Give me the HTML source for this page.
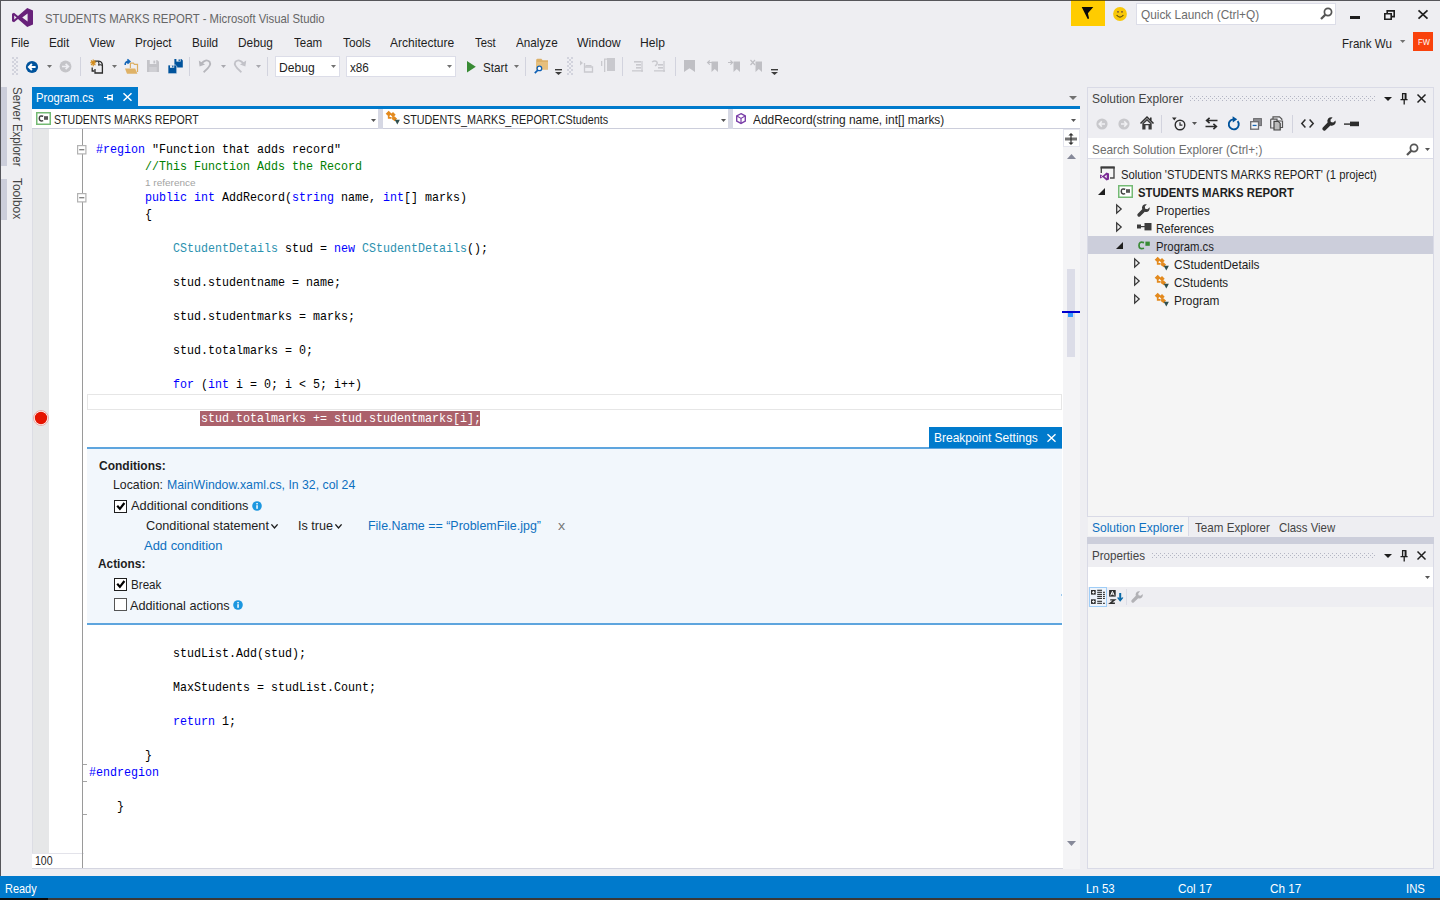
<!DOCTYPE html>
<html>
<head>
<meta charset="utf-8">
<title>STUDENTS MARKS REPORT - Microsoft Visual Studio</title>
<style>
*{box-sizing:border-box;margin:0;padding:0}
html,body{width:1440px;height:900px;overflow:hidden;background:#eeeef2}
body{font-family:"Liberation Sans",sans-serif;font-size:12px;color:#1e1e1e;position:relative}
.a{position:absolute;white-space:nowrap}
.t{position:absolute;white-space:pre;line-height:16px;height:16px}
.code{position:absolute;white-space:pre;font-family:"Liberation Mono",monospace;font-size:13px;line-height:17px;transform-origin:0 0;transform:scaleX(0.8974);height:17px;color:#000}
.k{color:#0000ff}.c{color:#008000}.ty{color:#2b91af}
svg{position:absolute;overflow:visible}
</style>
</head>
<body>
<!-- window frame -->
<div class="a" style="left:0px;top:0px;width:1440px;height:1px;background:#55555a;"></div>
<div class="a" style="left:0px;top:0px;width:1px;height:876px;background:#55555a;"></div>
<!-- title bar -->
<svg style="left:12px;top:8px;" width="21" height="19" viewBox="0 0 21 19"><path fill="#68217a" fill-rule="evenodd" d="M15.2 0 L21 2.4 V16.6 L15.2 19 L6 10.9 L2 14.2 L0 13.2 V5.8 L2 4.8 L6 8.1 Z M15.6 5.6 L10.2 9.5 L15.6 13.4 Z M2.2 7.4 V11.6 L4.6 9.5 Z"/></svg>
<div class="t" style="left:44.67px;top:11.00px;font-size:13px;color:#666;transform-origin:0 0;transform:scaleX(0.8718);">STUDENTS MARKS REPORT - Microsoft Visual Studio</div>
<div class="a" style="left:1070.6px;top:0px;width:34.2px;height:26px;background:#ffcc00;"></div>
<div class="a" style="left:1070.6px;top:0px;width:34.2px;height:1px;background:#6b5600;"></div>
<svg style="left:1081px;top:6px;" width="13" height="14" viewBox="0 0 13 14"><path fill="#0a0a0a" d="M0.7 0.9 H12.3 L6.9 7.2 L8.1 12.6 L6.7 13 Z"/></svg>
<svg style="left:1112.6px;top:6.6px;" width="14" height="14" viewBox="0 0 14 14"><circle cx="7" cy="7" r="6.9" fill="#f8c808"/><circle cx="5" cy="4.8" r="0.9" fill="#6b4a3a"/><circle cx="9" cy="4.8" r="0.9" fill="#6b4a3a"/><path d="M3.6 8 Q7 12.4 10.4 8" fill="none" stroke="#5a4a10" stroke-width="1.2"/></svg>
<div class="a" style="left:1136px;top:3px;width:200px;height:22px;background:#fff;border:1px solid #dcdde8"></div>
<div class="t" style="left:1141.47px;top:7.00px;font-size:13px;color:#6d6d6d;transform-origin:0 0;transform:scaleX(0.9110);">Quick Launch (Ctrl+Q)</div>
<svg style="left:1320px;top:7px;" width="13.5" height="13" viewBox="0 0 13.5 13"><circle cx="8" cy="5" r="3.6" fill="none" stroke="#555" stroke-width="1.7"/><path d="M5.4 7.6 L1 12" stroke="#555" stroke-width="2.2"/></svg>
<div class="a" style="left:1350px;top:16px;width:10px;height:3px;background:#1e1e1e;"></div>
<svg style="left:1384px;top:10px;" width="11" height="10" viewBox="0 0 11 10"><path fill="none" stroke="#1e1e1e" stroke-width="1.6" d="M0.8 3.8 H7.2 V9.2 H0.8 Z M3.2 3.6 V0.9 H10.2 V6.6 H7.4"/></svg>
<svg style="left:1418px;top:10px;" width="10" height="9" viewBox="0 0 10 9"><path stroke="#1e1e1e" stroke-width="1.7" d="M0.5 0.3 L9.5 8.7 M9.5 0.3 L0.5 8.7"/></svg>
<div class="t" style="left:1341.58px;top:36.00px;font-size:13px;color:#1e1e1e;transform-origin:0 0;transform:scaleX(0.8902);">Frank Wu</div>
<svg style="left:1399.6px;top:40.2px;" width="5.4" height="3" viewBox="0 0 5.4 3"><path fill="#717171" d="M0 0 H5.4 L2.7 3 Z"/></svg>
<div class="a" style="left:1413.4px;top:31.6px;width:19.8px;height:19.6px;background:#f9420c;"></div>
<div class="t" style="left:1417.58px;top:34.00px;font-size:9px;color:#fff;transform-origin:0 0;transform:scaleX(0.8464);">FW</div>
<!-- menu -->
<div class="t" style="left:10.68px;top:35.00px;font-size:13px;color:#1e1e1e;transform-origin:0 0;transform:scaleX(0.8782);">File</div>
<div class="t" style="left:48.92px;top:35.00px;font-size:13px;color:#1e1e1e;transform-origin:0 0;transform:scaleX(0.8993);">Edit</div>
<div class="t" style="left:89.17px;top:35.00px;font-size:13px;color:#1e1e1e;transform-origin:0 0;transform:scaleX(0.9176);">View</div>
<div class="t" style="left:134.68px;top:35.00px;font-size:13px;color:#1e1e1e;transform-origin:0 0;transform:scaleX(0.9056);">Project</div>
<div class="t" style="left:191.68px;top:35.00px;font-size:13px;color:#1e1e1e;transform-origin:0 0;transform:scaleX(0.9042);">Build</div>
<div class="t" style="left:238.43px;top:35.00px;font-size:13px;color:#1e1e1e;transform-origin:0 0;transform:scaleX(0.9109);">Debug</div>
<div class="t" style="left:294.18px;top:35.00px;font-size:13px;color:#1e1e1e;transform-origin:0 0;transform:scaleX(0.8853);">Team</div>
<div class="t" style="left:342.68px;top:35.00px;font-size:13px;color:#1e1e1e;transform-origin:0 0;transform:scaleX(0.9108);">Tools</div>
<div class="t" style="left:390.18px;top:35.00px;font-size:13px;color:#1e1e1e;transform-origin:0 0;transform:scaleX(0.9247);">Architecture</div>
<div class="t" style="left:474.68px;top:35.00px;font-size:13px;color:#1e1e1e;transform-origin:0 0;transform:scaleX(0.8661);">Test</div>
<div class="t" style="left:515.67px;top:35.00px;font-size:13px;color:#1e1e1e;transform-origin:0 0;transform:scaleX(0.9005);">Analyze</div>
<div class="t" style="left:577.17px;top:35.00px;font-size:13px;color:#1e1e1e;transform-origin:0 0;transform:scaleX(0.9438);">Window</div>
<div class="t" style="left:640.42px;top:35.00px;font-size:13px;color:#1e1e1e;transform-origin:0 0;transform:scaleX(0.9308);">Help</div>
<!-- toolbar -->
<svg style="left:12px;top:57px;" width="6" height="18" viewBox="0 0 6 18"><rect x="0" y="0" width="2" height="2" fill="#d2d3dd"/><rect x="4" y="0" width="2" height="2" fill="#d2d3dd"/><rect x="2" y="2" width="2" height="2" fill="#d2d3dd"/><rect x="0" y="4" width="2" height="2" fill="#d2d3dd"/><rect x="4" y="4" width="2" height="2" fill="#d2d3dd"/><rect x="2" y="6" width="2" height="2" fill="#d2d3dd"/><rect x="0" y="8" width="2" height="2" fill="#d2d3dd"/><rect x="4" y="8" width="2" height="2" fill="#d2d3dd"/><rect x="2" y="10" width="2" height="2" fill="#d2d3dd"/><rect x="0" y="12" width="2" height="2" fill="#d2d3dd"/><rect x="4" y="12" width="2" height="2" fill="#d2d3dd"/><rect x="2" y="14" width="2" height="2" fill="#d2d3dd"/><rect x="0" y="16" width="2" height="2" fill="#d2d3dd"/><rect x="4" y="16" width="2" height="2" fill="#d2d3dd"/></svg>
<svg style="left:25px;top:59.6px;" width="14" height="14" viewBox="0 0 14 14"><circle cx="7" cy="7" r="6.1" fill="#00539c"/><path d="M10.6 7 H4.2 M6.9 4 L3.9 7 L6.9 10" fill="none" stroke="#fff" stroke-width="1.9"/></svg>
<svg style="left:46.5px;top:65px;" width="5" height="3" viewBox="0 0 5 3"><path fill="#717171" d="M0 0 H5 L2.5 3 Z"/></svg>
<svg style="left:59.2px;top:60px;" width="13" height="13" viewBox="0 0 13 13"><circle cx="6.5" cy="6.5" r="5.9" fill="#c4c4c8"/><path d="M3 6.5 H9 M6.6 3.8 L9.4 6.5 L6.6 9.2" fill="none" stroke="#eeeef2" stroke-width="1.7"/></svg>
<div class="a" style="left:80px;top:57px;width:1px;height:19px;background:#d2d3de;"></div>
<svg style="left:90px;top:59px;" width="13" height="15" viewBox="0 0 13 15"><path d="M4.2 2.2 H8.6 Q12.4 2.6 12.4 6.4 V14 H5 V10" fill="none" stroke="#2b2b2b" stroke-width="1.3"/><path d="M8.4 2.4 Q9.6 5.4 8.2 6.2 Q11 5.2 12.2 6.4" fill="none" stroke="#2b2b2b" stroke-width="1.1"/><path d="M2.2 8.6 V12 H4.4" fill="none" stroke="#2b2b2b" stroke-width="1.3"/><path d="M3.2 0.4 V7.2 M0.2 3.8 H6.2 M1 1.5 L5.4 6.1 M5.4 1.5 L1 6.1" stroke="#d08a1c" stroke-width="1.1"/></svg>
<svg style="left:111.5px;top:65px;" width="5" height="3" viewBox="0 0 5 3"><path fill="#717171" d="M0 0 H5 L2.5 3 Z"/></svg>
<svg style="left:124px;top:59px;" width="15" height="16" viewBox="0 0 15 16"><path d="M6.4 9 V4.2 H9.4 L10.4 5.4 H13.5 V13" fill="none" stroke="#dcae62" stroke-width="1.2"/><path d="M1 9.6 H11.2 L13.4 14.8 H3 Z" fill="#dfb267"/><path d="M1.2 6 Q0.8 2.4 5 2.4 M3.4 0.3 L5.8 2.4 L3.4 4.6" fill="none" stroke="#1767b8" stroke-width="1.6"/></svg>
<svg style="left:147px;top:60.4px;" width="12" height="12" viewBox="0 0 12 12"><path d="M0 0 H10.2 L12 1.8 V12 H0 Z" fill="#c3c3c8"/><rect x="2.8" y="0" width="6.4" height="4" fill="#eeeef2"/><rect x="6.4" y="0.6" width="1.8" height="2.8" fill="#c3c3c8"/><rect x="2.2" y="7" width="7.6" height="5" fill="#cfcfd4"/></svg>
<svg style="left:167.6px;top:59.2px;" width="15" height="15" viewBox="0 0 15 15"><path d="M6.4 0 H13.4 L14.8 1.4 V8.4 H6.4 Z" fill="#00539c"/><rect x="8.4" y="0" width="4.2" height="2.6" fill="#eeeef2"/><rect x="10.6" y="0.4" width="1.2" height="1.8" fill="#00539c"/><path d="M0 6 H7.4 L8.8 7.4 V14.7 H0 Z" fill="#00539c" stroke="#eeeef2" stroke-width="0.7"/><rect x="2" y="6.2" width="4.2" height="2.6" fill="#eeeef2"/><rect x="4.2" y="6.6" width="1.2" height="1.8" fill="#00539c"/></svg>
<div class="a" style="left:189px;top:57px;width:1px;height:19px;background:#d2d3de;"></div>
<svg style="left:198px;top:59px;" width="14" height="14" viewBox="0 0 14 14"><path d="M3.4 4.6 Q7.6 -0.6 11.6 2.8 Q14.2 6.4 5.6 13.2" fill="none" stroke="#b6b6bc" stroke-width="1.8"/><path d="M0.8 1.4 L1.6 7.6 L7 5.6 Z" fill="#b6b6bc"/></svg>
<svg style="left:220.5px;top:65px;" width="5" height="3" viewBox="0 0 5 3"><path fill="#a8a8ae" d="M0 0 H5 L2.5 3 Z"/></svg>
<svg style="left:233px;top:59px;" width="14" height="14" viewBox="0 0 14 14"><path d="M10.6 4.6 Q6.4 -0.6 2.4 2.8 Q-0.2 6.4 8.4 13.2" fill="none" stroke="#c2c2c8" stroke-width="1.8"/><path d="M13.2 1.4 L12.4 7.6 L7 5.6 Z" fill="#c2c2c8"/></svg>
<svg style="left:255.5px;top:65px;" width="5" height="3" viewBox="0 0 5 3"><path fill="#a8a8ae" d="M0 0 H5 L2.5 3 Z"/></svg>
<div class="a" style="left:267px;top:57px;width:1px;height:19px;background:#d2d3de;"></div>
<div class="a" style="left:275px;top:56px;width:65px;height:21px;background:#fff;border:1px solid #dcdde8"></div>
<div class="t" style="left:279.18px;top:60.00px;font-size:13px;color:#1e1e1e;transform-origin:0 0;transform:scaleX(0.9305);">Debug</div>
<svg style="left:330.5px;top:65px;" width="5" height="3" viewBox="0 0 5 3"><path fill="#717171" d="M0 0 H5 L2.5 3 Z"/></svg>
<div class="a" style="left:346px;top:56px;width:110px;height:21px;background:#fff;border:1px solid #dcdde8"></div>
<div class="t" style="left:350.18px;top:60.00px;font-size:13px;color:#1e1e1e;transform-origin:0 0;transform:scaleX(0.9013);">x86</div>
<svg style="left:446.5px;top:65px;" width="5" height="3" viewBox="0 0 5 3"><path fill="#717171" d="M0 0 H5 L2.5 3 Z"/></svg>
<svg style="left:467px;top:61px;" width="9" height="12" viewBox="0 0 9 12"><path d="M0 0 L8.8 5.8 L0 11.6 Z" fill="#388a34"/></svg>
<div class="t" style="left:482.68px;top:60.00px;font-size:13px;color:#1e1e1e;transform-origin:0 0;transform:scaleX(0.8974);">Start</div>
<svg style="left:513.5px;top:65px;" width="5" height="3" viewBox="0 0 5 3"><path fill="#717171" d="M0 0 H5 L2.5 3 Z"/></svg>
<div class="a" style="left:525px;top:57px;width:1px;height:19px;background:#d2d3de;"></div>
<svg style="left:534px;top:58px;" width="15" height="16" viewBox="0 0 15 16"><path d="M2.2 1.6 L3.4 0.8 H7.4 L8.6 2.2 H14 V11.4 H2.2 Z" fill="#dcb067"/><path d="M2.2 4 H14 V11.4 H2.2 Z" fill="#e6bf7c"/><circle cx="5.4" cy="10.4" r="2.3" fill="#fff" stroke="#0e60b5" stroke-width="1.3"/><path d="M3.8 12.2 L0.8 15.2" stroke="#0e60b5" stroke-width="1.7"/></svg>
<svg style="left:555px;top:69px;" width="7" height="6" viewBox="0 0 7 6"><rect x="0" y="0" width="7" height="1.4" fill="#3c3c3c"/><path d="M0 3 H7 L3.5 6 Z" fill="#3c3c3c"/></svg>
<svg style="left:567px;top:57px;" width="6" height="18" viewBox="0 0 6 18"><rect x="0" y="0" width="2" height="2" fill="#d2d3dd"/><rect x="4" y="0" width="2" height="2" fill="#d2d3dd"/><rect x="2" y="2" width="2" height="2" fill="#d2d3dd"/><rect x="0" y="4" width="2" height="2" fill="#d2d3dd"/><rect x="4" y="4" width="2" height="2" fill="#d2d3dd"/><rect x="2" y="6" width="2" height="2" fill="#d2d3dd"/><rect x="0" y="8" width="2" height="2" fill="#d2d3dd"/><rect x="4" y="8" width="2" height="2" fill="#d2d3dd"/><rect x="2" y="10" width="2" height="2" fill="#d2d3dd"/><rect x="0" y="12" width="2" height="2" fill="#d2d3dd"/><rect x="4" y="12" width="2" height="2" fill="#d2d3dd"/><rect x="2" y="14" width="2" height="2" fill="#d2d3dd"/><rect x="0" y="16" width="2" height="2" fill="#d2d3dd"/><rect x="4" y="16" width="2" height="2" fill="#d2d3dd"/></svg>
<svg style="left:580px;top:60px;" width="13.5" height="13" viewBox="0 0 13.5 13"><path d="M0 0.5 L3 3 L0 5.5 Z" fill="#c9c9ce"/><path d="M4.5 3 V12 H12.5 V7 H4.5" fill="none" stroke="#c9c9ce" stroke-width="1.3"/><rect x="5.5" y="5" width="6" height="1.3" fill="#c9c9ce"/></svg>
<svg style="left:601px;top:58px;" width="14" height="16" viewBox="0 0 14 16"><rect x="0" y="3" width="1.3" height="5" fill="#c9c9ce"/><rect x="3" y="1" width="1.3" height="13" fill="#c9c9ce"/><rect x="6" y="0" width="8" height="13" fill="#c9c9ce"/><rect x="3" y="0.5" width="4" height="1.2" fill="#c9c9ce"/></svg>
<div class="a" style="left:622px;top:57px;width:1px;height:19px;background:#d2d3de;"></div>
<svg style="left:632px;top:61px;" width="11" height="11" viewBox="0 0 11 11"><rect x="2" y="0" width="7" height="1.6" fill="#c9c9ce"/><rect x="4" y="3" width="5" height="1.6" fill="#c9c9ce"/><rect x="4" y="6" width="5" height="1.6" fill="#c9c9ce"/><rect x="0" y="9" width="11" height="1.6" fill="#c9c9ce" opacity=".8"/><rect x="9" y="0" width="2" height="11" fill="#c9c9ce" opacity=".6"/></svg>
<svg style="left:652px;top:61px;" width="13.5" height="11" viewBox="0 0 13.5 11"><path d="M0 1 Q3 -1 5 1 Q6 3 3 5" fill="none" stroke="#c9c9ce" stroke-width="1.4"/><rect x="6" y="3" width="5" height="1.6" fill="#c9c9ce"/><rect x="6" y="6" width="5" height="1.6" fill="#c9c9ce"/><rect x="2" y="9" width="11" height="1.6" fill="#c9c9ce" opacity=".8"/><rect x="11" y="0" width="2" height="11" fill="#c9c9ce" opacity=".6"/></svg>
<div class="a" style="left:675px;top:57px;width:1px;height:19px;background:#d2d3de;"></div>
<svg style="left:684px;top:60px;" width="11" height="12" viewBox="0 0 11 12"><path d="M0 0 H11 V12 L5.5 8.2 L0 12 Z" fill="#bfbfc4"/></svg>
<svg style="left:707px;top:60px;" width="11" height="12" viewBox="0 0 11 12"><path d="M4.5 1.5 H11 V12 L7.8 9 L4.5 12 Z" fill="#bfbfc4"/><path d="M5 2.5 H0.8 M2.8 0.5 L0.6 2.5 L2.8 4.6" fill="none" stroke="#bfbfc4" stroke-width="1.2"/></svg>
<svg style="left:728px;top:60px;" width="12" height="12" viewBox="0 0 12 12"><path d="M5.5 1.5 H12 V12 L8.8 9 L5.5 12 Z" fill="#bfbfc4"/><path d="M0 2.5 H4.4 M2.4 0.5 L4.6 2.5 L2.4 4.6" fill="none" stroke="#bfbfc4" stroke-width="1.2"/></svg>
<svg style="left:750px;top:60px;" width="12" height="12" viewBox="0 0 12 12"><path d="M5.5 1.5 H12 V12 L8.8 9 L5.5 12 Z" fill="#bfbfc4"/><path d="M0.5 0 L5 5 M5 0 L0.5 5" fill="none" stroke="#bfbfc4" stroke-width="1.2"/></svg>
<svg style="left:771px;top:69px;" width="7" height="6" viewBox="0 0 7 6"><rect x="0" y="0" width="7" height="1.4" fill="#3c3c3c"/><path d="M0 3 H7 L3.5 6 Z" fill="#3c3c3c"/></svg>
<!-- left autohide strip -->
<div class="a" style="left:1px;top:87px;width:6px;height:79px;background:#cccedb;"></div>
<div class="a" style="left:1px;top:179px;width:6px;height:41px;background:#cccedb;"></div>
<div class="t" style="left:24.60px;top:86.70px;font-size:12px;color:#444;transform-origin:0 0;transform:rotate(90deg) scaleX(0.9535);">Server Explorer</div>
<div class="t" style="left:24.60px;top:178.40px;font-size:12px;color:#444;transform-origin:0 0;transform:rotate(90deg) scaleX(0.9958);">Toolbox</div>
<!-- document tab -->
<div class="a" style="left:32px;top:87px;width:106px;height:19px;background:#007acc;"></div>
<div class="a" style="left:32px;top:106px;width:1048px;height:2.7px;background:#007acc;"></div>
<div class="t" style="left:35.67px;top:90.00px;font-size:13px;color:#fff;transform-origin:0 0;transform:scaleX(0.8673);">Program.cs</div>
<svg style="left:104px;top:93.8px;" width="10" height="7" viewBox="0 0 10 7"><path d="M0 3.5 H3.5 M3.8 0.8 V6.2 M3.8 1.5 H8 V5 H3.8 M8.3 0.3 V6.7" fill="none" stroke="#fff" stroke-width="1.2"/><rect x="4" y="4" width="4" height="1.4" fill="#fff"/></svg>
<svg style="left:123px;top:93.4px;" width="9" height="8" viewBox="0 0 9 8"><path d="M0.5 0.3 L8.5 7.7 M8.5 0.3 L0.5 7.7" stroke="#fff" stroke-width="1.5"/></svg>
<svg style="left:1069px;top:96px;" width="8" height="4" viewBox="0 0 8 4"><path d="M0 0 H8 L4 4 Z" fill="#717171"/></svg>
<!-- navigation bar -->
<div class="a" style="left:32px;top:108.6px;width:1048px;height:20.4px;background:#fff;"></div>
<div class="a" style="left:32px;top:128.3px;width:1048px;height:1.2px;background:#cccedb;"></div>
<div class="a" style="left:378px;top:108.6px;width:5px;height:20.4px;background:#d6d8e4;"></div>
<div class="a" style="left:728px;top:108.6px;width:5px;height:20.4px;background:#d6d8e4;"></div>
<svg style="left:36px;top:112px;" width="15" height="13.5" viewBox="0 0 15 13.5"><rect x="0.75" y="0.75" width="13.5" height="11.5" fill="#fff" stroke="#74ba74" stroke-width="1.5"/><path d="M7.2 4.3 Q3.2 3 3.3 6.5 Q3.4 9.8 7.2 8.6" fill="none" stroke="#3c3c3c" stroke-width="1.5"/><rect x="8" y="4.2" width="4" height="3.6" fill="#555"/></svg>
<div class="t" style="left:53.57px;top:112.00px;font-size:13px;color:#1e1e1e;transform-origin:0 0;transform:scaleX(0.8157);">STUDENTS MARKS REPORT</div>
<svg style="left:371.1px;top:118.5px;" width="5" height="3" viewBox="0 0 5 3"><path fill="#555" d="M0 0 H5 L2.5 3 Z"/></svg>
<svg style="left:386px;top:111px;" width="15" height="14" viewBox="0 0 15 14"><path d="M-0.3 2.7 L2.7 -0.2 L5.7 2.7 L2.7 5.6 Z M4.3 3.7 L7 1.1 L9.7 3.7 L7 6.3 Z M5.9 7.7 L8.5 5.2 L11.1 7.7 L8.5 10.2 Z" fill="#e38a1e"/><path d="M2.7 4.6 V6.8 H5.6 M7 5.2 V7.7 H8" fill="none" stroke="#e38a1e" stroke-width="1.7"/><path d="M8.7 8.8 H13.9 L11.3 13.4 Z" fill="#2f4f4f"/></svg>
<div class="t" style="left:403.28px;top:112.00px;font-size:13px;color:#1e1e1e;transform-origin:0 0;transform:scaleX(0.8283);">STUDENTS_MARKS_REPORT.CStudents</div>
<svg style="left:720.6px;top:118.5px;" width="5" height="3" viewBox="0 0 5 3"><path fill="#555" d="M0 0 H5 L2.5 3 Z"/></svg>
<svg style="left:736px;top:113px;" width="10" height="11" viewBox="0 0 10 11"><path d="M5 0.7 L9.3 3 V8 L5 10.4 L0.7 8 V3 Z" fill="#fff" stroke="#7a3ea8" stroke-width="1.4"/><path d="M0.9 3.1 L5 5.4 L9.1 3.1 M5 5.4 V10.2" fill="none" stroke="#7a3ea8" stroke-width="1.2"/></svg>
<div class="t" style="left:753.07px;top:112.00px;font-size:13px;color:#1e1e1e;transform-origin:0 0;transform:scaleX(0.9160);">AddRecord(string name, int[] marks)</div>
<svg style="left:1070.5px;top:118.5px;" width="5" height="3" viewBox="0 0 5 3"><path fill="#555" d="M0 0 H5 L2.5 3 Z"/></svg>
<!-- editor surface -->
<div class="a" style="left:32px;top:129px;width:1031px;height:740px;background:#fff;"></div>
<div class="a" style="left:32px;top:129px;width:17px;height:724px;background:#e6e7e8;"></div>
<div class="a" style="left:32px;top:129px;width:1px;height:740px;background:#dcdde4;"></div>
<div class="a" style="left:32px;top:853px;width:52px;height:16px;background:#fff;border-top:1px solid #e3e3ea"></div>
<div class="a" style="left:82px;top:129px;width:1px;height:740px;background:#9a9a9a;"></div>
<div class="t" style="left:34.70px;top:853.00px;font-size:12px;color:#1e1e1e;transform-origin:0 0;transform:scaleX(0.8786);">100</div>
<div class="a" style="left:32px;top:868px;width:1031px;height:1px;background:#d4d5e0;"></div>
<div class="a" style="left:1063px;top:129px;width:17px;height:740px;background:#f4f4f6;"></div>
<div class="a" style="left:1063px;top:129px;width:17px;height:18px;background:#fff;border:1px solid #e4e5ee"></div>
<svg style="left:1065px;top:133px;" width="12" height="12" viewBox="0 0 12 12"><rect x="0" y="4.6" width="12" height="2.8" fill="#555"/><rect x="0" y="5.4" width="12" height="1.2" fill="#888"/><path d="M6 0 L8.6 2.6 H3.4 Z M6 12 L8.6 9.4 H3.4 Z" fill="#333"/><rect x="5.4" y="2" width="1.2" height="8" fill="#333"/></svg>
<svg style="left:1066.5px;top:154px;" width="9" height="5" viewBox="0 0 9 5"><path d="M0 5 H9 L4.5 0 Z" fill="#868999"/></svg>
<svg style="left:1066.5px;top:841.3px;" width="9" height="5" viewBox="0 0 9 5"><path d="M0 0 H9 L4.5 5 Z" fill="#868999"/></svg>
<div class="a" style="left:1067px;top:269px;width:8px;height:88px;background:#dcdde8;"></div>
<div class="a" style="left:1062px;top:311px;width:18px;height:2px;background:#0000cd;"></div>
<div class="a" style="left:1068px;top:313px;width:5px;height:4px;background:#3399ff;"></div>
<svg style="left:77.2px;top:144.9px;" width="9.5" height="9.5" viewBox="0 0 9.5 9.5"><rect x="0.6" y="0.6" width="8.3" height="8.3" fill="#fff" stroke="#b2b2b2" stroke-width="1.2"/><rect x="2.2" y="4.2" width="5.1" height="1.1" fill="#666"/></svg>
<svg style="left:77.2px;top:192.9px;" width="9.5" height="9.5" viewBox="0 0 9.5 9.5"><rect x="0.6" y="0.6" width="8.3" height="8.3" fill="#fff" stroke="#b2b2b2" stroke-width="1.2"/><rect x="2.2" y="4.2" width="5.1" height="1.1" fill="#666"/></svg>
<div class="a" style="left:83px;top:764px;width:4px;height:1px;background:#a5a5a5;"></div>
<div class="a" style="left:83px;top:781px;width:4px;height:1px;background:#a5a5a5;"></div>
<div class="a" style="left:83px;top:814px;width:4px;height:1px;background:#a5a5a5;"></div>
<!-- code -->
<div class="code" style="left:95.6px;top:141px"><span class="k">#region</span> "Function that adds record"</div>
<div class="code" style="left:144.6px;top:158px"><span class="c">//This Function Adds the Record</span></div>
<div class="t" style="left:144.99px;top:175.00px;font-size:8.5px;color:#a3a3a3;transform-origin:0 0;transform:scaleX(1.1773);">1 reference</div>
<div class="code" style="left:144.6px;top:189px"><span class="k">public</span> <span class="k">int</span> AddRecord(<span class="k">string</span> name, <span class="k">int</span>[] marks)</div>
<div class="code" style="left:144.6px;top:206px">{</div>
<div class="code" style="left:172.6px;top:240px"><span class="ty">CStudentDetails</span> stud = <span class="k">new</span> <span class="ty">CStudentDetails</span>();</div>
<div class="code" style="left:172.6px;top:274px">stud.studentname = name;</div>
<div class="code" style="left:172.6px;top:308px">stud.studentmarks = marks;</div>
<div class="code" style="left:172.6px;top:342px">stud.totalmarks = 0;</div>
<div class="code" style="left:172.6px;top:376px"><span class="k">for</span> (<span class="k">int</span> i = 0; i &lt; 5; i++)</div>
<div class="a" style="left:87px;top:394px;width:975px;height:16px;background:#fff;border:1px solid #e6e6e6"></div>
<div class="a" style="left:200.2px;top:410.8px;width:280.2px;height:15.2px;background:#ab616b;"></div>
<div class="code" style="left:200.6px;top:410px;color:#fff">stud.totalmarks += stud.studentmarks[i];</div>
<svg style="left:33px;top:410px;" width="16" height="16" viewBox="0 0 16 16"><circle cx="8" cy="8" r="7.4" fill="#fff" stroke="#e8928a" stroke-width="0.8"/><circle cx="8" cy="8" r="6.2" fill="#e51400"/></svg>
<div class="code" style="left:172.6px;top:645px">studList.Add(stud);</div>
<div class="code" style="left:172.6px;top:679px">MaxStudents = studList.Count;</div>
<div class="code" style="left:172.6px;top:713px"><span class="k">return</span> 1;</div>
<div class="code" style="left:144.6px;top:747px">}</div>
<div class="code" style="left:88.6px;top:764px"><span class="k">#endregion</span></div>
<div class="code" style="left:116.6px;top:798px">}</div>
<!-- breakpoint settings peek -->
<div class="a" style="left:87px;top:447px;width:975px;height:178px;background:#f2f7fc;"></div>
<div class="a" style="left:87px;top:447px;width:975px;height:2px;background:#5ea5de;"></div>
<div class="a" style="left:87px;top:623px;width:975px;height:2px;background:#5ea5de;"></div>
<div class="a" style="left:929px;top:427px;width:133px;height:21px;background:#007acc;"></div>
<div class="a" style="left:1061px;top:594px;width:1px;height:2px;background:#9cc8ee;"></div>
<div class="t" style="left:933.67px;top:430.00px;font-size:13px;color:#fff;transform-origin:0 0;transform:scaleX(0.9212);">Breakpoint Settings</div>
<svg style="left:1047px;top:434px;" width="9" height="8" viewBox="0 0 9 8"><path d="M0.5 0.3 L8.5 7.7 M8.5 0.3 L0.5 7.7" stroke="#fff" stroke-width="1.4"/></svg>
<div class="t" style="left:99.06px;top:458.00px;font-size:13.5px;color:#1e1e1e;font-weight:700;transform-origin:0 0;transform:scaleX(0.8892);">Conditions:</div>
<div class="t" style="left:113.41px;top:477.00px;font-size:13.5px;color:#1e1e1e;transform-origin:0 0;transform:scaleX(0.9111);">Location:</div>
<div class="t" style="left:166.66px;top:477.00px;font-size:13.5px;color:#0e70c0;transform-origin:0 0;transform:scaleX(0.9091);">MainWindow.xaml.cs, In 32, col 24</div>
<svg style="left:114px;top:499.5px;" width="13.5" height="13" viewBox="0 0 13.5 13"><rect x="0.5" y="0.5" width="12" height="12" fill="#fff" stroke="#1e1e1e"/><path d="M3.2 5.8 L5.9 8.8 L10.4 3" fill="none" stroke="#000" stroke-width="2.2"/></svg>
<div class="t" style="left:131.16px;top:498.00px;font-size:13.5px;color:#1e1e1e;transform-origin:0 0;transform:scaleX(0.9486);">Additional conditions</div>
<svg style="left:252.3px;top:500.8px;" width="10" height="10" viewBox="0 0 10 10"><circle cx="5" cy="5" r="4.8" fill="#1c97e0"/><rect x="4.3" y="4.2" width="1.5" height="3.6" fill="#fff"/><rect x="4.3" y="2" width="1.5" height="1.4" fill="#fff"/></svg>
<div class="t" style="left:145.91px;top:518.00px;font-size:13.5px;color:#1e1e1e;transform-origin:0 0;transform:scaleX(0.9414);">Conditional statement</div>
<svg style="left:271px;top:523.5px;" width="7" height="5" viewBox="0 0 7 5"><path d="M0.4 0.4 L3.5 4 L6.6 0.4" fill="none" stroke="#1e1e1e" stroke-width="1.4"/></svg>
<div class="t" style="left:297.76px;top:518.00px;font-size:13.5px;color:#1e1e1e;transform-origin:0 0;transform:scaleX(0.9349);">Is true</div>
<svg style="left:335px;top:523.5px;" width="7" height="5" viewBox="0 0 7 5"><path d="M0.4 0.4 L3.5 4 L6.6 0.4" fill="none" stroke="#1e1e1e" stroke-width="1.4"/></svg>
<div class="t" style="left:367.96px;top:518.00px;font-size:13.5px;color:#0e70c0;transform-origin:0 0;transform:scaleX(0.9221);">File.Name == “ProblemFile.jpg”</div>
<div class="t" style="left:558.41px;top:518.00px;font-size:13.5px;color:#777;transform-origin:0 0;transform:scaleX(1.0556);">x</div>
<div class="t" style="left:143.86px;top:538.00px;font-size:13.5px;color:#0e70c0;transform-origin:0 0;transform:scaleX(0.9592);">Add condition</div>
<div class="t" style="left:97.96px;top:556.00px;font-size:13.5px;color:#1e1e1e;font-weight:700;transform-origin:0 0;transform:scaleX(0.8773);">Actions:</div>
<svg style="left:114px;top:577.8px;" width="13.5" height="13" viewBox="0 0 13.5 13"><rect x="0.5" y="0.5" width="12" height="12" fill="#fff" stroke="#1e1e1e"/><path d="M3.2 5.8 L5.9 8.8 L10.4 3" fill="none" stroke="#000" stroke-width="2.2"/></svg>
<div class="t" style="left:131.16px;top:577.00px;font-size:13.5px;color:#1e1e1e;transform-origin:0 0;transform:scaleX(0.8624);">Break</div>
<svg style="left:114px;top:598px;" width="13.5" height="13" viewBox="0 0 13.5 13"><rect x="0.5" y="0.5" width="12" height="12" fill="#fff" stroke="#555"/></svg>
<div class="t" style="left:130.06px;top:598.00px;font-size:13.5px;color:#1e1e1e;transform-origin:0 0;transform:scaleX(0.9419);">Additional actions</div>
<svg style="left:232.7px;top:600.4px;" width="10" height="10" viewBox="0 0 10 10"><circle cx="5" cy="5" r="4.8" fill="#1c97e0"/><rect x="4.3" y="4.2" width="1.5" height="3.6" fill="#fff"/><rect x="4.3" y="2" width="1.5" height="1.4" fill="#fff"/></svg>
<!-- solution explorer -->
<div class="a" style="left:1087px;top:87px;width:347px;height:430px;background:#f5f5f5;border:1px solid #d9dae6"></div>
<div class="a" style="left:1088px;top:88px;width:345px;height:50px;background:#eeeef2;"></div>
<div class="t" style="left:1091.88px;top:91.00px;font-size:13px;color:#444;transform-origin:0 0;transform:scaleX(0.9207);">Solution Explorer</div>
<svg style="left:1190px;top:96px;" width="185" height="5" viewBox="0 0 185 5"><path d="M0 0.5 H185 M2 2.5 H185 M0 4.5 H185" fill="none" stroke="#b4b6c4" stroke-width="1" stroke-dasharray="1 3"/></svg>
<svg style="left:1383.5px;top:97px;" width="8" height="4" viewBox="0 0 8 4"><path d="M0 0 H8 L4 4 Z" fill="#1e1e1e"/></svg>
<svg style="left:1400px;top:93px;" width="8" height="12" viewBox="0 0 8 12"><path d="M2 0.6 H6.4 M2.6 0.6 V6.5 M5.8 0.6 V6.5 M0.5 6.6 H7.6 M4.2 6.6 V11.5" fill="none" stroke="#1e1e1e" stroke-width="1.3"/><rect x="4.6" y="0.6" width="1.6" height="6" fill="#1e1e1e"/></svg>
<svg style="left:1417px;top:94px;" width="9" height="9" viewBox="0 0 9 9"><path d="M0.5 0.5 L8.5 8.5 M8.5 0.5 L0.5 8.5" stroke="#1e1e1e" stroke-width="1.5"/></svg>
<svg style="left:1096px;top:118px;" width="12" height="12" viewBox="0 0 12 12"><circle cx="6" cy="6" r="5.6" fill="#c8c8cc"/><path d="M9 6 H3.4 M5.8 3.4 L3.2 6 L5.8 8.6" fill="none" stroke="#f0f0f3" stroke-width="1.5"/></svg>
<svg style="left:1118px;top:118px;" width="12" height="12" viewBox="0 0 12 12"><circle cx="6" cy="6" r="5.6" fill="#c8c8cc"/><path d="M3 6 H8.6 M6.2 3.4 L8.8 6 L6.2 8.6" fill="none" stroke="#f0f0f3" stroke-width="1.5"/></svg>
<svg style="left:1140px;top:116px;" width="14" height="14" viewBox="0 0 14 14"><path d="M0.5 7.5 L7 1 L13.5 7.5" fill="none" stroke="#2d2d2d" stroke-width="1.5"/><path d="M2.3 7.2 L7 2.8 L11.7 7.2 V13.6 H8.5 V9.2 H5.5 V13.6 H2.3 Z" fill="#3a3a3a"/><path d="M3.8 7.8 L7 4.8 L10.2 7.8 V8 H3.8 Z" fill="#eeeef2"/><rect x="10" y="1.5" width="1.6" height="3" fill="#2d2d2d"/></svg>
<div class="a" style="left:1161px;top:115px;width:1px;height:18px;background:#d2d3de;"></div>
<svg style="left:1172px;top:117px;" width="14" height="14" viewBox="0 0 14 14"><circle cx="8" cy="8" r="4.8" fill="none" stroke="#2d2d2d" stroke-width="1.4"/><path d="M8 5.2 V8.2 H10.4" fill="none" stroke="#2d2d2d" stroke-width="1.2"/><path d="M0 0.5 H4.6 L2.3 3.4 Z" fill="#2d2d2d"/></svg>
<svg style="left:1192.1px;top:122px;" width="5" height="3" viewBox="0 0 5 3"><path fill="#555" d="M0 0 H5 L2.5 3 Z"/></svg>
<svg style="left:1205px;top:117px;" width="13.5" height="13" viewBox="0 0 13.5 13"><path d="M12.5 3.5 H2 M4.6 0.8 L1.6 3.5 L4.6 6.2 M0.5 9.5 H11 M8.4 6.8 L11.4 9.5 L8.4 12.2" fill="none" stroke="#2d2d2d" stroke-width="1.6"/></svg>
<svg style="left:1227px;top:116px;" width="13.5" height="14" viewBox="0 0 13.5 14"><path d="M10.6 5.2 A5 5 0 1 1 6.3 3.4" fill="none" stroke="#00539c" stroke-width="1.9"/><path d="M5.6 0.2 L10.2 3.2 L5.8 6.4 Z" fill="#00539c"/></svg>
<svg style="left:1250px;top:118px;" width="12" height="12" viewBox="0 0 12 12"><rect x="3.6" y="0.6" width="7.8" height="7" fill="#8c8c90" stroke="#6a6a6e" stroke-width="1"/><rect x="0.7" y="3.7" width="7.8" height="7.5" fill="#f5f5f7" stroke="#6a6a6e" stroke-width="1.3"/><rect x="2.6" y="6.8" width="4" height="1.3" fill="#1565b5"/></svg>
<svg style="left:1270px;top:116px;" width="15" height="15" viewBox="0 0 15 15"><path d="M3 3 V0.8 H9.5 L11.8 3 V4" fill="none" stroke="#555" stroke-width="1.2"/><path d="M0.7 3.2 H7 V5 H12.5 V11.5 H10" fill="none" stroke="#555" stroke-width="1.2"/><path d="M0.7 3.2 V12 H4" fill="none" stroke="#555" stroke-width="1.2"/><path d="M4 5.4 H8.2 L10.2 7.4 V14 H4 Z" fill="#bbb" stroke="#444" stroke-width="1.2"/></svg>
<div class="a" style="left:1292px;top:115px;width:1px;height:18px;background:#d2d3de;"></div>
<svg style="left:1301px;top:119px;" width="13.5" height="9" viewBox="0 0 13.5 9"><path d="M4.4 0.5 L0.8 4.5 L4.4 8.5 M8.6 0.5 L12.2 4.5 L8.6 8.5" fill="none" stroke="#2d2d2d" stroke-width="1.5"/></svg>
<svg style="left:1322px;top:117px;" width="14" height="14" viewBox="0 0 14 14"><path d="M13.6 3.4 L11.2 5.6 L8.8 5 L8.4 2.8 L10.6 0.4 Q8 -0.3 6.2 1.6 Q4.8 3.4 5.6 5.6 L0.6 10.8 Q-0.2 12 0.9 13.1 Q2 14.2 3.2 13.4 L8.4 8.4 Q10.8 9.2 12.6 7.6 Q14.2 5.8 13.6 3.4 Z" fill="#2d2d2d"/></svg>
<svg style="left:1344px;top:121px;" width="15" height="6" viewBox="0 0 15 6"><rect x="0" y="2.4" width="7" height="1.4" fill="#2d2d2d"/><rect x="6" y="0.6" width="9" height="4.6" fill="#2d2d2d"/></svg>
<div class="a" style="left:1088px;top:138px;width:345px;height:21px;background:#fff;border-bottom:1px solid #d9dae6"></div>
<div class="t" style="left:1091.88px;top:142.00px;font-size:13px;color:#6d6d6d;transform-origin:0 0;transform:scaleX(0.9085);">Search Solution Explorer (Ctrl+;)</div>
<svg style="left:1406px;top:143px;" width="13.5" height="13" viewBox="0 0 13.5 13"><circle cx="8" cy="5" r="3.6" fill="none" stroke="#555" stroke-width="1.7"/><path d="M5.4 7.6 L1 12" stroke="#555" stroke-width="2.2"/></svg>
<svg style="left:1424.9px;top:148px;" width="5" height="3" viewBox="0 0 5 3"><path fill="#555" d="M0 0 H5 L2.5 3 Z"/></svg>
<svg style="left:1100px;top:166px;" width="15" height="14" viewBox="0 0 15 14"><path d="M1.3 7 V1.4 H14 V12 H10" fill="none" stroke="#4a4a4a" stroke-width="1.4"/><rect x="0.6" y="0.4" width="14.1" height="2.2" fill="#3c3c3c"/><g transform="translate(0,6.4) scale(0.43)"><path fill="#7a2a94" fill-rule="evenodd" d="M15.2 0 L21 2.4 V16.6 L15.2 19 L6 10.9 L2 14.2 L0 13.2 V5.8 L2 4.8 L6 8.1 Z M15.6 5.6 L10.2 9.5 L15.6 13.4 Z M2.2 7.4 V11.6 L4.6 9.5 Z"/></g></svg>
<div class="t" style="left:1120.67px;top:167.00px;font-size:13px;color:#1e1e1e;transform-origin:0 0;transform:scaleX(0.8669);">Solution 'STUDENTS MARKS REPORT' (1 project)</div>
<svg style="left:1098px;top:188.3px;" width="7" height="7" viewBox="0 0 7 7"><path d="M7 0 V7 H0 Z" fill="#1e1e1e"/></svg>
<svg style="left:1118px;top:185px;" width="15" height="13.5" viewBox="0 0 15 13.5"><rect x="0.75" y="0.75" width="13.5" height="11.5" fill="#fff" stroke="#74ba74" stroke-width="1.5"/><path d="M7.2 4.3 Q3.2 3 3.3 6.5 Q3.4 9.8 7.2 8.6" fill="none" stroke="#3c3c3c" stroke-width="1.5"/><rect x="8" y="4.2" width="4" height="3.6" fill="#555"/></svg>
<div class="t" style="left:1138.38px;top:185.00px;font-size:13px;color:#1e1e1e;font-weight:700;transform-origin:0 0;transform:scaleX(0.8701);">STUDENTS MARKS REPORT</div>
<svg style="left:1116px;top:204px;" width="6" height="10" viewBox="0 0 6 10"><path d="M0.7 0.9 L5.2 5 L0.7 9.1 Z" fill="none" stroke="#333" stroke-width="1.25"/></svg>
<svg style="left:1136.6px;top:203.5px;" width="13.020000000000001" height="13.020000000000001" viewBox="0 0 14 14"><path d="M13.6 3.4 L11.2 5.6 L8.8 5 L8.4 2.8 L10.6 0.4 Q8 -0.3 6.2 1.6 Q4.8 3.4 5.6 5.6 L0.6 10.8 Q-0.2 12 0.9 13.1 Q2 14.2 3.2 13.4 L8.4 8.4 Q10.8 9.2 12.6 7.6 Q14.2 5.8 13.6 3.4 Z" fill="#3c3c3c"/></svg>
<div class="t" style="left:1156.47px;top:203.00px;font-size:13px;color:#1e1e1e;transform-origin:0 0;transform:scaleX(0.9089);">Properties</div>
<svg style="left:1116px;top:222px;" width="6" height="10" viewBox="0 0 6 10"><path d="M0.7 0.9 L5.2 5 L0.7 9.1 Z" fill="none" stroke="#333" stroke-width="1.25"/></svg>
<svg style="left:1136.6px;top:223px;" width="15" height="8" viewBox="0 0 15 8"><rect x="0" y="1.5" width="4" height="4" fill="#3c3c3c"/><rect x="4" y="3" width="4" height="1.2" fill="#3c3c3c"/><rect x="7.5" y="0" width="7" height="7.4" fill="#3c3c3c"/></svg>
<div class="t" style="left:1156.47px;top:221.00px;font-size:13px;color:#1e1e1e;transform-origin:0 0;transform:scaleX(0.8716);">References</div>
<div class="a" style="left:1088px;top:236px;width:345px;height:18px;background:#cccedb;"></div>
<svg style="left:1116px;top:242.3px;" width="7" height="7" viewBox="0 0 7 7"><path d="M7 0 V7 H0 Z" fill="#1e1e1e"/></svg>
<svg style="left:1138px;top:241px;" width="12" height="9" viewBox="0 0 12 9"><path d="M6 1.6 Q1 -0.2 1 4.4 Q1 8.8 6 7.2" fill="none" stroke="#388a34" stroke-width="1.7"/><rect x="7.4" y="0.6" width="4.4" height="4.2" fill="#388a34"/></svg>
<div class="t" style="left:1156.47px;top:239.00px;font-size:13px;color:#1e1e1e;transform-origin:0 0;transform:scaleX(0.8718);">Program.cs</div>
<svg style="left:1134px;top:258px;" width="6" height="10" viewBox="0 0 6 10"><path d="M0.7 0.9 L5.2 5 L0.7 9.1 Z" fill="none" stroke="#333" stroke-width="1.25"/></svg>
<svg style="left:1154.7px;top:257px;" width="15" height="14" viewBox="0 0 15 14"><path d="M-0.3 2.7 L2.7 -0.2 L5.7 2.7 L2.7 5.6 Z M4.3 3.7 L7 1.1 L9.7 3.7 L7 6.3 Z M5.9 7.7 L8.5 5.2 L11.1 7.7 L8.5 10.2 Z" fill="#e38a1e"/><path d="M2.7 4.6 V6.8 H5.6 M7 5.2 V7.7 H8" fill="none" stroke="#e38a1e" stroke-width="1.7"/><path d="M8.7 8.8 H13.9 L11.3 13.4 Z" fill="#2f4f4f"/></svg>
<div class="t" style="left:1174.17px;top:257.00px;font-size:13px;color:#1e1e1e;transform-origin:0 0;transform:scaleX(0.9095);">CStudentDetails</div>
<svg style="left:1134px;top:276px;" width="6" height="10" viewBox="0 0 6 10"><path d="M0.7 0.9 L5.2 5 L0.7 9.1 Z" fill="none" stroke="#333" stroke-width="1.25"/></svg>
<svg style="left:1154.7px;top:275px;" width="15" height="14" viewBox="0 0 15 14"><path d="M-0.3 2.7 L2.7 -0.2 L5.7 2.7 L2.7 5.6 Z M4.3 3.7 L7 1.1 L9.7 3.7 L7 6.3 Z M5.9 7.7 L8.5 5.2 L11.1 7.7 L8.5 10.2 Z" fill="#e38a1e"/><path d="M2.7 4.6 V6.8 H5.6 M7 5.2 V7.7 H8" fill="none" stroke="#e38a1e" stroke-width="1.7"/><path d="M8.7 8.8 H13.9 L11.3 13.4 Z" fill="#2f4f4f"/></svg>
<div class="t" style="left:1174.17px;top:275.00px;font-size:13px;color:#1e1e1e;transform-origin:0 0;transform:scaleX(0.8920);">CStudents</div>
<svg style="left:1134px;top:294px;" width="6" height="10" viewBox="0 0 6 10"><path d="M0.7 0.9 L5.2 5 L0.7 9.1 Z" fill="none" stroke="#333" stroke-width="1.25"/></svg>
<svg style="left:1154.7px;top:293px;" width="15" height="14" viewBox="0 0 15 14"><path d="M-0.3 2.7 L2.7 -0.2 L5.7 2.7 L2.7 5.6 Z M4.3 3.7 L7 1.1 L9.7 3.7 L7 6.3 Z M5.9 7.7 L8.5 5.2 L11.1 7.7 L8.5 10.2 Z" fill="#e38a1e"/><path d="M2.7 4.6 V6.8 H5.6 M7 5.2 V7.7 H8" fill="none" stroke="#e38a1e" stroke-width="1.7"/><path d="M8.7 8.8 H13.9 L11.3 13.4 Z" fill="#2f4f4f"/></svg>
<div class="t" style="left:1174.17px;top:293.00px;font-size:13px;color:#1e1e1e;transform-origin:0 0;transform:scaleX(0.9116);">Program</div>
<div class="a" style="left:1088px;top:517px;width:101px;height:19px;background:#f5f5f5;border-right:1px solid #d9dae6"></div>
<div class="t" style="left:1092.17px;top:520.00px;font-size:13px;color:#0e70c0;transform-origin:0 0;transform:scaleX(0.9232);">Solution Explorer</div>
<div class="t" style="left:1194.67px;top:520.00px;font-size:13px;color:#444;transform-origin:0 0;transform:scaleX(0.8937);">Team Explorer</div>
<div class="t" style="left:1279.17px;top:520.00px;font-size:13px;color:#444;transform-origin:0 0;transform:scaleX(0.8765);">Class View</div>
<div class="a" style="left:1087px;top:537px;width:347px;height:7px;background:#cccedb;"></div>
<!-- properties panel -->
<div class="a" style="left:1087px;top:544px;width:347px;height:325px;background:#f5f5f5;border:1px solid #d9dae6;border-top:none"></div>
<div class="a" style="left:1088px;top:544px;width:345px;height:23px;background:#eeeef2;"></div>
<div class="t" style="left:1091.88px;top:548.00px;font-size:13px;color:#444;transform-origin:0 0;transform:scaleX(0.8937);">Properties</div>
<svg style="left:1152px;top:553px;" width="223" height="5" viewBox="0 0 223 5"><path d="M0 0.5 H223 M2 2.5 H223 M0 4.5 H223" fill="none" stroke="#b4b6c4" stroke-width="1" stroke-dasharray="1 3"/></svg>
<svg style="left:1383.5px;top:554px;" width="8" height="4" viewBox="0 0 8 4"><path d="M0 0 H8 L4 4 Z" fill="#1e1e1e"/></svg>
<svg style="left:1400px;top:550px;" width="8" height="12" viewBox="0 0 8 12"><path d="M2 0.6 H6.4 M2.6 0.6 V6.5 M5.8 0.6 V6.5 M0.5 6.6 H7.6 M4.2 6.6 V11.5" fill="none" stroke="#1e1e1e" stroke-width="1.3"/><rect x="4.6" y="0.6" width="1.6" height="6" fill="#1e1e1e"/></svg>
<svg style="left:1417px;top:551px;" width="9" height="9" viewBox="0 0 9 9"><path d="M0.5 0.5 L8.5 8.5 M8.5 0.5 L0.5 8.5" stroke="#1e1e1e" stroke-width="1.5"/></svg>
<div class="a" style="left:1088px;top:567px;width:345px;height:20px;background:#fff;"></div>
<svg style="left:1425.0px;top:575.5px;" width="5" height="3" viewBox="0 0 5 3"><path fill="#555" d="M0 0 H5 L2.5 3 Z"/></svg>
<div class="a" style="left:1088px;top:587px;width:345px;height:20px;background:#eeeef2;"></div>
<div class="a" style="left:1089px;top:587px;width:18px;height:20px;background:#eef4fb;border:1px solid #9fcdf7"></div>
<svg style="left:1091px;top:590px;" width="14" height="14" viewBox="0 0 14 14"><rect x="0" y="0" width="4.7" height="4.6" fill="#2d2d2d"/><rect x="0" y="9.3" width="4.7" height="4.6" fill="#2d2d2d"/><path d="M1 2.3 H3.7 M2.35 1 V3.6 M1 11.6 H3.7 M2.35 10.3 V12.9" stroke="#fff" stroke-width="1"/><rect x="6.2" y="-0.25000000000000006" width="4.8" height="1.1" fill="#2d2d2d"/><rect x="6.2" y="1.7499999999999998" width="4.8" height="1.1" fill="#2d2d2d"/><rect x="6.2" y="3.8500000000000005" width="4.8" height="1.1" fill="#2d2d2d"/><rect x="6.2" y="5.8500000000000005" width="4.8" height="1.1" fill="#2d2d2d"/><rect x="6.2" y="7.8500000000000005" width="4.8" height="1.1" fill="#2d2d2d"/><rect x="6.2" y="10.75" width="4.8" height="1.1" fill="#2d2d2d"/><rect x="6.2" y="12.75" width="4.8" height="1.1" fill="#2d2d2d"/><rect x="12" y="1.7499999999999998" width="1.9" height="1.1" fill="#2d2d2d"/><rect x="12" y="3.8500000000000005" width="1.9" height="1.1" fill="#2d2d2d"/><rect x="12" y="5.8500000000000005" width="1.9" height="1.1" fill="#2d2d2d"/><rect x="12" y="7.8500000000000005" width="1.9" height="1.1" fill="#2d2d2d"/><rect x="12" y="12.75" width="1.9" height="1.1" fill="#2d2d2d"/></svg>
<svg style="left:1109px;top:590px;" width="15" height="14" viewBox="0 0 15 14"><rect x="0.1" y="0" width="6.6" height="6.6" fill="#2d2d2d"/><path d="M1.7 5.4 L3.4 1.3 L5.1 5.4 M2.3 4 H4.5" fill="none" stroke="#fff" stroke-width="1"/><path d="M1.2 9.9 H5.6 L1.2 13.2 H5.9" fill="none" stroke="#2d2d2d" stroke-width="1.4"/><path d="M11.2 3 V10 " fill="none" stroke="#0b6aa8" stroke-width="2"/><path d="M8 7.8 L11.2 11.8 L14.4 7.8 L13 7.2 L11.2 9.2 L9.4 7.2 Z" fill="#0b6aa8"/></svg>
<div class="a" style="left:1126px;top:589px;width:1px;height:16px;background:#dcdde6;"></div>
<svg style="left:1131px;top:590.6px;" width="12.04" height="12.04" viewBox="0 0 14 14"><path d="M13.6 3.4 L11.2 5.6 L8.8 5 L8.4 2.8 L10.6 0.4 Q8 -0.3 6.2 1.6 Q4.8 3.4 5.6 5.6 L0.6 10.8 Q-0.2 12 0.9 13.1 Q2 14.2 3.2 13.4 L8.4 8.4 Q10.8 9.2 12.6 7.6 Q14.2 5.8 13.6 3.4 Z" fill="#b2b2b6"/></svg>
<!-- status bar -->
<div class="a" style="left:0px;top:876px;width:1440px;height:22px;background:#007acc;"></div>
<div class="a" style="left:0px;top:898px;width:1440px;height:2px;background:#3b3836;"></div>
<div class="a" style="left:0px;top:898px;width:48px;height:2px;background:#0a0a0a;"></div>
<div class="t" style="left:4.67px;top:881.00px;font-size:13px;color:#fff;transform-origin:0 0;transform:scaleX(0.8422);">Ready</div>
<div class="t" style="left:1086.38px;top:881.00px;font-size:13px;color:#fff;transform-origin:0 0;transform:scaleX(0.8803);">Ln 53</div>
<div class="t" style="left:1178.38px;top:881.00px;font-size:13px;color:#fff;transform-origin:0 0;transform:scaleX(0.9035);">Col 17</div>
<div class="t" style="left:1270.38px;top:881.00px;font-size:13px;color:#fff;transform-origin:0 0;transform:scaleX(0.9005);">Ch 17</div>
<div class="t" style="left:1406.38px;top:881.00px;font-size:13px;color:#fff;transform-origin:0 0;transform:scaleX(0.8698);">INS</div>
</body>
</html>
